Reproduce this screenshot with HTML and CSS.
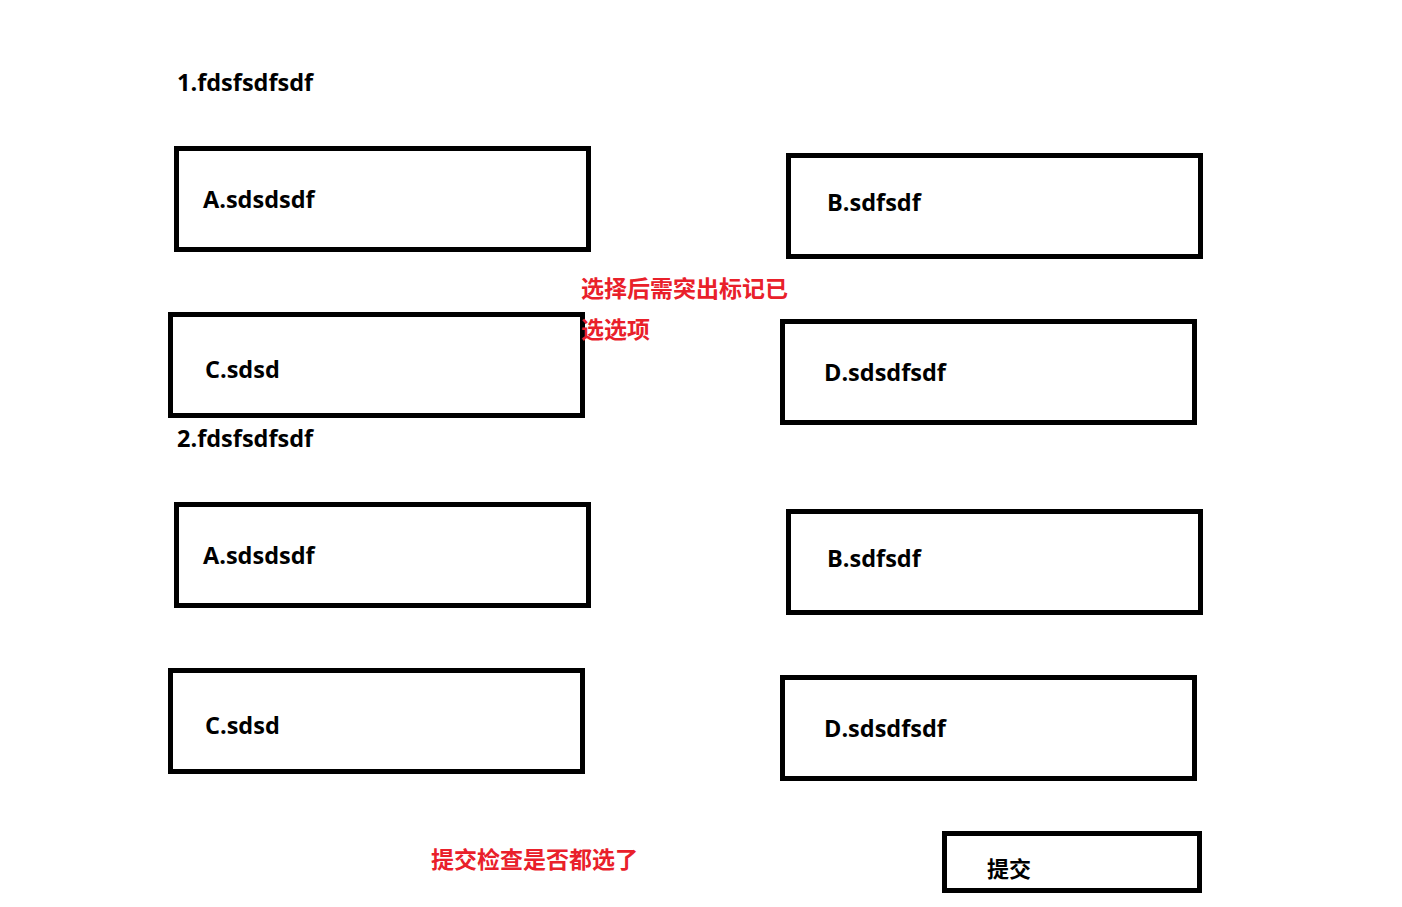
FILE: index.html
```html
<!DOCTYPE html>
<html lang="zh-CN">
<head>
  <meta charset="UTF-8" />
  <meta name="viewport" content="width=device-width, initial-scale=1.0" />
  <title>答题</title>
  <link rel="stylesheet" href="styles.css">
</head>
<body>
  <div class="quiz">

    <!-- Question 1 -->
    <div class="question">
      <div class="q-title">1.fdsfsdfsdf</div>
      <div class="row row-top">
        <div class="option opt-a">A.sdsdsdf</div>
        <div class="option opt-b">B.sdfsdf</div>
      </div>
      <div class="row row-bottom">
        <div class="option opt-c">C.sdsd</div>
        <div class="option opt-d">D.sdsdfsdf</div>
      </div>
      <!-- annotation for the designer -->
      <div class="note note-select">选择后需突出标记已<br>选选项</div>
    </div>

    <!-- Question 2 -->
    <div class="question">
      <div class="q-title">2.fdsfsdfsdf</div>
      <div class="row row-top">
        <div class="option opt-a">A.sdsdsdf</div>
        <div class="option opt-b">B.sdfsdf</div>
      </div>
      <div class="row row-bottom">
        <div class="option opt-c">C.sdsd</div>
        <div class="option opt-d">D.sdsdfsdf</div>
      </div>
    </div>

    <div class="footer">
      <div class="note note-submit">提交检查是否都选了</div>
      <button type="button" class="submit">提交</button>
    </div>
  </div>
</body>
</html>
```

FILE: styles.css
```css
body {
  margin: 0;
  background: #fff;
  font-family: "Open Sans", "Noto Sans CJK SC", sans-serif;
  font-weight: 700;
  color: #000;
}
.quiz {
  padding-top: 67px;
}
.question {
  position: relative;
  height: 356px;
}
.q-title {
  font-size: 23.5px;
  line-height: 30px;
  padding-left: 177px;
}
/* option rows */
.row {
  display: flex;
  align-items: flex-start;
  gap: 195px;
}
.row-top {
  margin-top: 49px;
  padding-left: 174px;
}
.row-bottom {
  margin-top: 53px;
  padding-left: 168px;
}
.option {
  box-sizing: border-box;
  width: 417px;
  height: 106px;
  border: 5px solid #000;
  display: flex;
  align-items: center;
  font-size: 23.5px;
  cursor: pointer;
}
.opt-a {
  padding-left: 24px;
}
.opt-b {
  margin-top: 7px;
  padding-left: 36px;
  padding-bottom: 8px;
}
.opt-c {
  padding-left: 32px;
  padding-top: 8px;
}
.opt-d {
  margin-top: 7px;
  padding-left: 39px;
}
/* red notes */
.note {
  color: #e9202a;
  font-family: "Noto Sans CJK SC", sans-serif;
  font-size: 23px;
  font-weight: 700;
}
.note-select {
  position: absolute;
  left: 581px;
  top: 200px;
  line-height: 41px;
}
.footer {
  display: flex;
  align-items: flex-start;
  margin-top: 52px;
  padding-left: 431px;
}
.note-submit {
  margin-top: 12px;
  line-height: 30px;
}
.submit {
  box-sizing: border-box;
  width: 260px;
  height: 62px;
  margin-left: 304px;
  border: 5px solid #000;
  background: #fff;
  text-align: left;
  padding: 10px 0 0 40px;
  font-family: "Noto Sans CJK SC", sans-serif;
  font-size: 22px;
  font-weight: 700;
  color: #000;
  cursor: pointer;
}
```
